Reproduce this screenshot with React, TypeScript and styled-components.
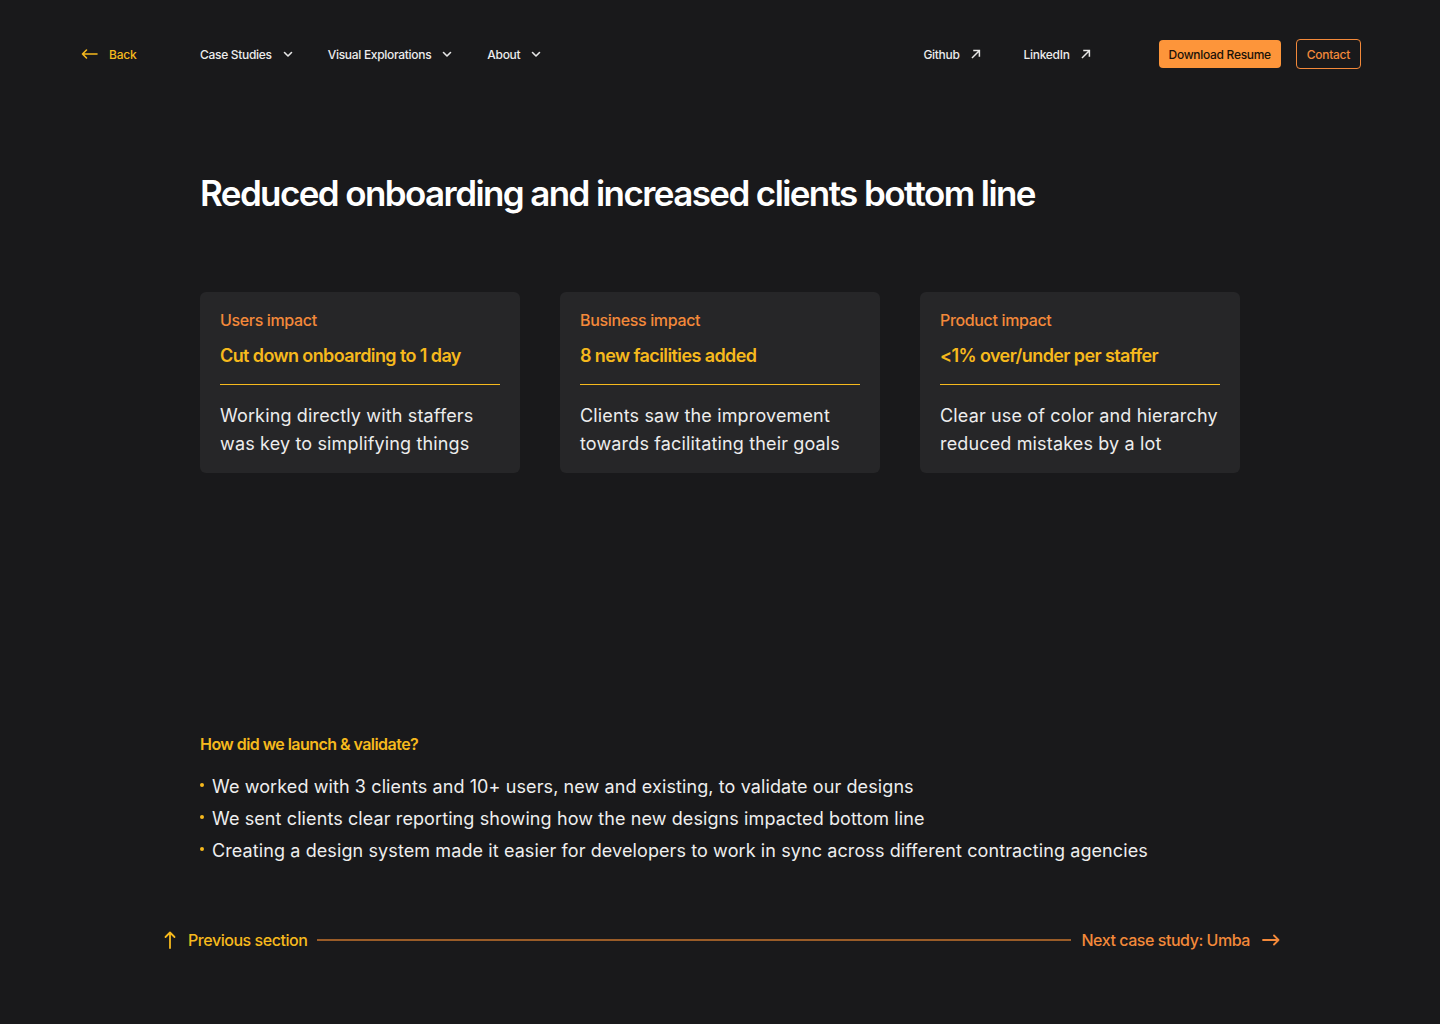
import React from "react";
import styled, { createGlobalStyle } from "styled-components";

const Global = createGlobalStyle`
  html, body { margin: 0; padding: 0; background: #19191b; }
  body { font-family: Inter, "Noto Sans", sans-serif; color: #f2f2f2; -webkit-font-smoothing: antialiased; }
  * { box-sizing: border-box; }
`;

const YELLOW = "#f6b91d";
const ORANGE = "#f3893a";

const Page = styled.div`
  width: 1440px;
  min-height: 1024px;
  background: #19191b;
  display: flex;
  flex-direction: column;
`;

const Nav = styled.nav`
  display: flex;
  align-items: center;
  height: 30px;
  margin-top: 39px;
  padding: 0 79px 0 81px;
`;

const BackLink = styled.a`
  display: flex;
  align-items: center;
  gap: 11px;
  color: ${YELLOW};
  font-size: 12px;
  font-weight: 500;
  width: 119px;
  letter-spacing: -0.2px;
`;

const NavGroup = styled.div`
  display: flex;
  align-items: center;
  gap: 35px;
`;

const NavItem = styled.a`
  display: flex;
  align-items: center;
  gap: 11px;
  color: #ececec;
  font-size: 12px;
  font-weight: 500;
  letter-spacing: -0.3px;
`;

const Spacer = styled.div`
  flex: 1;
`;

const ExtGroup = styled.div`
  display: flex;
  align-items: center;
  gap: 43px;
  margin-right: 68px;
`;

const Buttons = styled.div`
  display: flex;
  align-items: center;
  gap: 15px;
`;

const Button = styled.a<{ $filled?: boolean }>`
  display: flex;
  align-items: center;
  justify-content: center;
  height: ${(p) => (p.$filled ? "28px" : "30px")};
  padding: 0 10px;
  border-radius: 4px;
  font-size: 12px;
  font-weight: 500;
  letter-spacing: -0.3px;
  background: ${(p) => (p.$filled ? "#fd953a" : "transparent")};
  color: ${(p) => (p.$filled ? "#1a1208" : ORANGE)};
  border: ${(p) => (p.$filled ? "none" : `1px solid ${ORANGE}`)};
`;

const Main = styled.main`
  width: 1040px;
  margin: 0 auto;
  display: flex;
  flex-direction: column;
`;

const Title = styled.h1`
  margin: 102px 0 0;
  font-size: 35px;
  line-height: 44px;
  font-weight: 600;
  letter-spacing: -1.6px;
  color: #ffffff;
`;

const Cards = styled.div`
  display: grid;
  grid-template-columns: repeat(3, 320px);
  gap: 40px;
  margin-top: 77px;
`;

const Card = styled.div`
  background: #262628;
  border-radius: 6px;
  padding: 17px 20px 15px;
  display: flex;
  flex-direction: column;
`;

const CardLabel = styled.div`
  color: ${ORANGE};
  font-size: 16px;
  line-height: 22px;
  font-weight: 500;
  letter-spacing: -0.35px;
`;

const CardHeadline = styled.div`
  color: ${YELLOW};
  font-size: 18px;
  line-height: 26px;
  font-weight: 600;
  letter-spacing: -0.6px;
  margin-top: 12px;
`;

const Divider = styled.div`
  height: 1px;
  background: ${YELLOW};
  margin-top: 15px;
`;

const CardBody = styled.p`
  margin: 17px 0 0;
  color: #ededed;
  font-size: 18px;
  line-height: 28px;
  font-weight: 400;
  letter-spacing: 0.15px;
`;

const Section = styled.section`
  margin-top: 260px;
  display: flex;
  flex-direction: column;
`;

const SectionTitle = styled.h2`
  margin: 0;
  color: ${YELLOW};
  font-size: 16px;
  line-height: 22px;
  font-weight: 600;
  letter-spacing: -0.55px;
`;

const List = styled.ul`
  list-style: none;
  margin: 18px 0 0;
  padding: 0;
  display: flex;
  flex-direction: column;
  gap: 4px;
`;

const ListItem = styled.li`
  display: flex;
  align-items: center;
  gap: 8px;
  font-size: 18px;
  line-height: 28px;
  color: #eeeeee;
  letter-spacing: 0.1px;
  &::before {
    content: "";
    width: 4px;
    height: 4px;
    border-radius: 50%;
    background: ${YELLOW};
    margin-top: -4px;
  }
`;

const Footer = styled.footer`
  width: 1120px;
  margin: 64px auto 0;
  padding-left: 4px;
  display: flex;
  align-items: center;
  gap: 10px;
`;

const FootLink = styled.a<{ $color: string }>`
  display: flex;
  align-items: center;
  gap: 12px;
  color: ${(p) => p.$color};
  font-size: 16px;
  line-height: 22px;
  font-weight: 500;
  letter-spacing: -0.45px;
  white-space: nowrap;
`;

const Rule = styled.div`
  flex: 1;
  height: 2px;
  background: #9a5c28;
`;

const Chevron = () => (
  <svg width="10" height="10" viewBox="0 0 10 10" fill="none" stroke="#e6e6e6" strokeWidth="1.6" strokeLinecap="round" strokeLinejoin="round">
    <path d="M1.5 3.5L5 7l3.5-3.5" />
  </svg>
);

const ExtArrow = () => (
  <svg width="10" height="10" viewBox="0 0 10 10" fill="none" stroke="#e6e6e6" strokeWidth="1.5" strokeLinecap="square" strokeLinejoin="miter">
    <path d="M1.5 8.5L8 2M3 1.6h5.4V7" />
  </svg>
);

const ArrowLeft = ({ color }: { color: string }) => (
  <svg width="17" height="12" viewBox="0 0 17 12" fill="none" stroke={color} strokeWidth="1.6" strokeLinecap="round" strokeLinejoin="round">
    <path d="M16 6H1.5M5.5 2L1.5 6l4 4" />
  </svg>
);

const ArrowRight = ({ color }: { color: string }) => (
  <svg width="18" height="12" viewBox="0 0 18 12" fill="none" stroke={color} strokeWidth="1.8" strokeLinecap="round" strokeLinejoin="round">
    <path d="M1 6h15.5M12 1.5L16.5 6 12 10.5" />
  </svg>
);

const ArrowUp = ({ color }: { color: string }) => (
  <svg width="12" height="18" viewBox="0 0 12 18" fill="none" stroke={color} strokeWidth="1.8" strokeLinecap="round" strokeLinejoin="round">
    <path d="M6 17V1.5M1.5 6L6 1.5 10.5 6" />
  </svg>
);

const cards = [
  {
    label: "Users impact",
    headline: "Cut down onboarding to 1 day",
    body: ["Working directly with staffers", "was key to simplifying things"],
  },
  {
    label: "Business impact",
    headline: "8 new facilities added",
    body: ["Clients saw the improvement", "towards facilitating their goals"],
  },
  {
    label: "Product impact",
    headline: "<1% over/under per staffer",
    body: ["Clear use of color and hierarchy", "reduced mistakes by a lot"],
  },
];

const bullets = [
  "We worked with 3 clients and 10+ users, new and existing, to validate our designs",
  "We sent clients clear reporting showing how the new designs impacted bottom line",
  "Creating a design system made it easier for developers to work in sync across different contracting agencies",
];

export default function App() {
  return (
    <Page>
      <Global />
      <Nav>
        <BackLink>
          <ArrowLeft color={YELLOW} />
          Back
        </BackLink>
        <NavGroup>
          <NavItem>
            Case Studies <Chevron />
          </NavItem>
          <NavItem>
            Visual Explorations <Chevron />
          </NavItem>
          <NavItem>
            About <Chevron />
          </NavItem>
        </NavGroup>
        <Spacer />
        <ExtGroup>
          <NavItem>
            Github <ExtArrow />
          </NavItem>
          <NavItem>
            LinkedIn <ExtArrow />
          </NavItem>
        </ExtGroup>
        <Buttons>
          <Button $filled>Download Resume</Button>
          <Button>Contact</Button>
        </Buttons>
      </Nav>
      <Main>
        <Title>Reduced onboarding and increased clients bottom line</Title>
        <Cards>
          {cards.map((c) => (
            <Card key={c.label}>
              <CardLabel>{c.label}</CardLabel>
              <CardHeadline>{c.headline}</CardHeadline>
              <Divider />
              <CardBody>
                {c.body[0]}
                <br />
                {c.body[1]}
              </CardBody>
            </Card>
          ))}
        </Cards>
        <Section>
          <SectionTitle>How did we launch &amp; validate?</SectionTitle>
          <List>
            {bullets.map((b) => (
              <ListItem key={b}>{b}</ListItem>
            ))}
          </List>
        </Section>
      </Main>
      <Footer>
        <FootLink $color={YELLOW}>
          <ArrowUp color={YELLOW} />
          Previous section
        </FootLink>
        <Rule />
        <FootLink $color={ORANGE}>
          Next case study: Umba
          <ArrowRight color={ORANGE} />
        </FootLink>
      </Footer>
    </Page>
  );
}
